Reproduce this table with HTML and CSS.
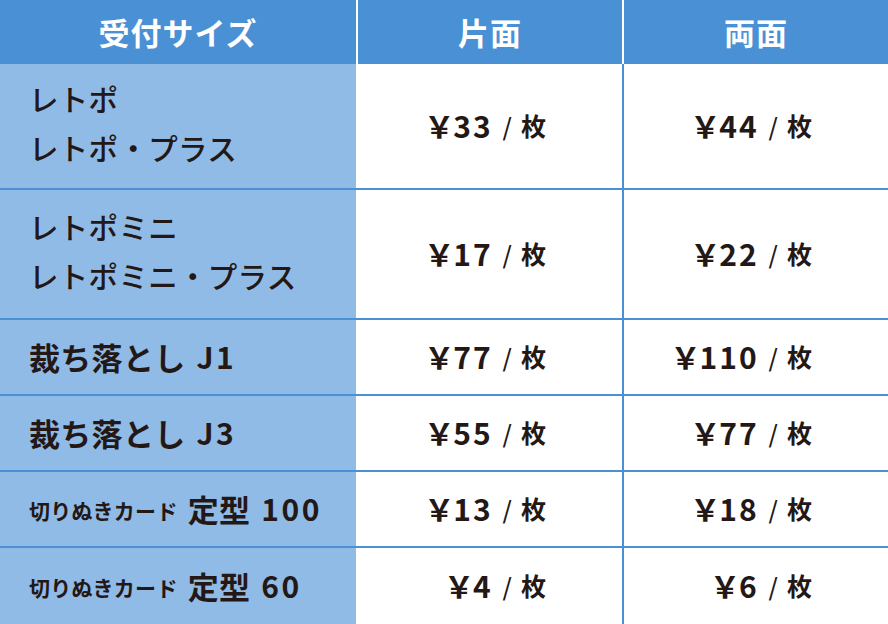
FILE: index.html
```html
<!DOCTYPE html>
<html lang="ja">
<head>
<meta charset="utf-8">
<link rel="stylesheet" href="styles.css">
</head>
<body>
<div class="table">
  <div class="row head">
    <div class="cell c1">受付サイズ</div>
    <div class="cell c2">片面</div>
    <div class="cell c3">両面</div>
  </div>
  <div class="row r1">
    <div class="cell c1 name two"><div>レトポ<br>レトポ・プラス</div></div>
    <div class="cell c2 price"><span class="yen">￥</span>33<span class="slash">/</span><span class="unit">枚</span></div>
    <div class="cell c3 price"><span class="yen">￥</span>44<span class="slash">/</span><span class="unit">枚</span></div>
  </div>
  <div class="row r2">
    <div class="cell c1 name two"><div>レトポミニ<br>レトポミニ・プラス</div></div>
    <div class="cell c2 price"><span class="yen">￥</span>17<span class="slash">/</span><span class="unit">枚</span></div>
    <div class="cell c3 price"><span class="yen">￥</span>22<span class="slash">/</span><span class="unit">枚</span></div>
  </div>
  <div class="row r3">
    <div class="cell c1 name bold"><span class="jp">裁ち落とし</span><span class="num">J1</span></div>
    <div class="cell c2 price"><span class="yen">￥</span>77<span class="slash">/</span><span class="unit">枚</span></div>
    <div class="cell c3 price"><span class="yen">￥</span>110<span class="slash">/</span><span class="unit">枚</span></div>
  </div>
  <div class="row r3">
    <div class="cell c1 name bold"><span class="jp">裁ち落とし</span><span class="num">J3</span></div>
    <div class="cell c2 price"><span class="yen">￥</span>55<span class="slash">/</span><span class="unit">枚</span></div>
    <div class="cell c3 price"><span class="yen">￥</span>77<span class="slash">/</span><span class="unit">枚</span></div>
  </div>
  <div class="row r3">
    <div class="cell c1 name bold"><span class="small">切りぬきカード</span><span class="jp">定型</span><span class="num">100</span></div>
    <div class="cell c2 price"><span class="yen">￥</span>13<span class="slash">/</span><span class="unit">枚</span></div>
    <div class="cell c3 price"><span class="yen">￥</span>18<span class="slash">/</span><span class="unit">枚</span></div>
  </div>
  <div class="row r6">
    <div class="cell c1 name bold"><span class="small">切りぬきカード</span><span class="jp">定型</span><span class="num">60</span></div>
    <div class="cell c2 price"><span class="yen">￥</span>4<span class="slash">/</span><span class="unit">枚</span></div>
    <div class="cell c3 price"><span class="yen">￥</span>6<span class="slash">/</span><span class="unit">枚</span></div>
  </div>
</div>
</body>
</html>
```

FILE: styles.css
```css
html, body {
  margin: 0;
  padding: 0;
  background: #ffffff;
}
body {
  font-family: "Noto Sans CJK JP", "Noto Sans", sans-serif;
  color: #231815;
}
.table {
  width: 888px;
  height: 624px;
  display: flex;
  flex-direction: column;
}
.row {
  display: grid;
  grid-template-columns: 356px 266px 266px;
  box-sizing: border-box;
  border-top: 2px solid #4a90d4;
}
.row.head {
  height: 64px;
  border-top: none;
  background: #4a90d4;
}
.row.r1 { height: 124px; border-top: none; }
.row.r2 { height: 130px; }
.row.r3 { height: 76px; }
.row.r6 { height: 78px; }
.cell {
  box-sizing: border-box;
  display: flex;
  align-items: center;
}
.c2 { border-left: 2px solid #ffffff; }
.c3 { border-left: 2px solid #4a90d4; }
.head .c3 { border-left-color: #ffffff; }
.head .cell {
  justify-content: center;
  color: #ffffff;
  font-weight: 700;
  font-size: 31px;
  letter-spacing: 1px;
  padding-bottom: 1px;
}
.c1.name {
  background: #90bbe6;
  padding-left: 29px;
  font-size: 29.5px;
  font-weight: 500;
  letter-spacing: 0.3px;
}
.c1.name.two {
  line-height: 49px;
  padding-bottom: 6px;
}
.c1.name.bold {
  font-weight: 700;
  padding-bottom: 2px;
}
.jp {
  font-size: 31px;
  letter-spacing: 0.3px;
}
.num {
  font-size: 30px;
  letter-spacing: 2.5px;
  margin-left: 11px;
}
.small {
  font-size: 21px;
  letter-spacing: 0.3px;
  margin-right: 10px;
  padding-top: 4px;
}
.price {
  justify-content: flex-end;
  padding-right: 76px;
  font-weight: 700;
  font-size: 30px;
  letter-spacing: 2px;
  padding-bottom: 2px;
}
.yen {
  letter-spacing: 0;
  margin-right: -1px;
}
.slash {
  font-size: 24px;
  font-weight: 500;
  letter-spacing: 0;
  margin-left: 10px;
  margin-right: 9px;
}
.unit {
  font-size: 25px;
  letter-spacing: 0;
}
```
